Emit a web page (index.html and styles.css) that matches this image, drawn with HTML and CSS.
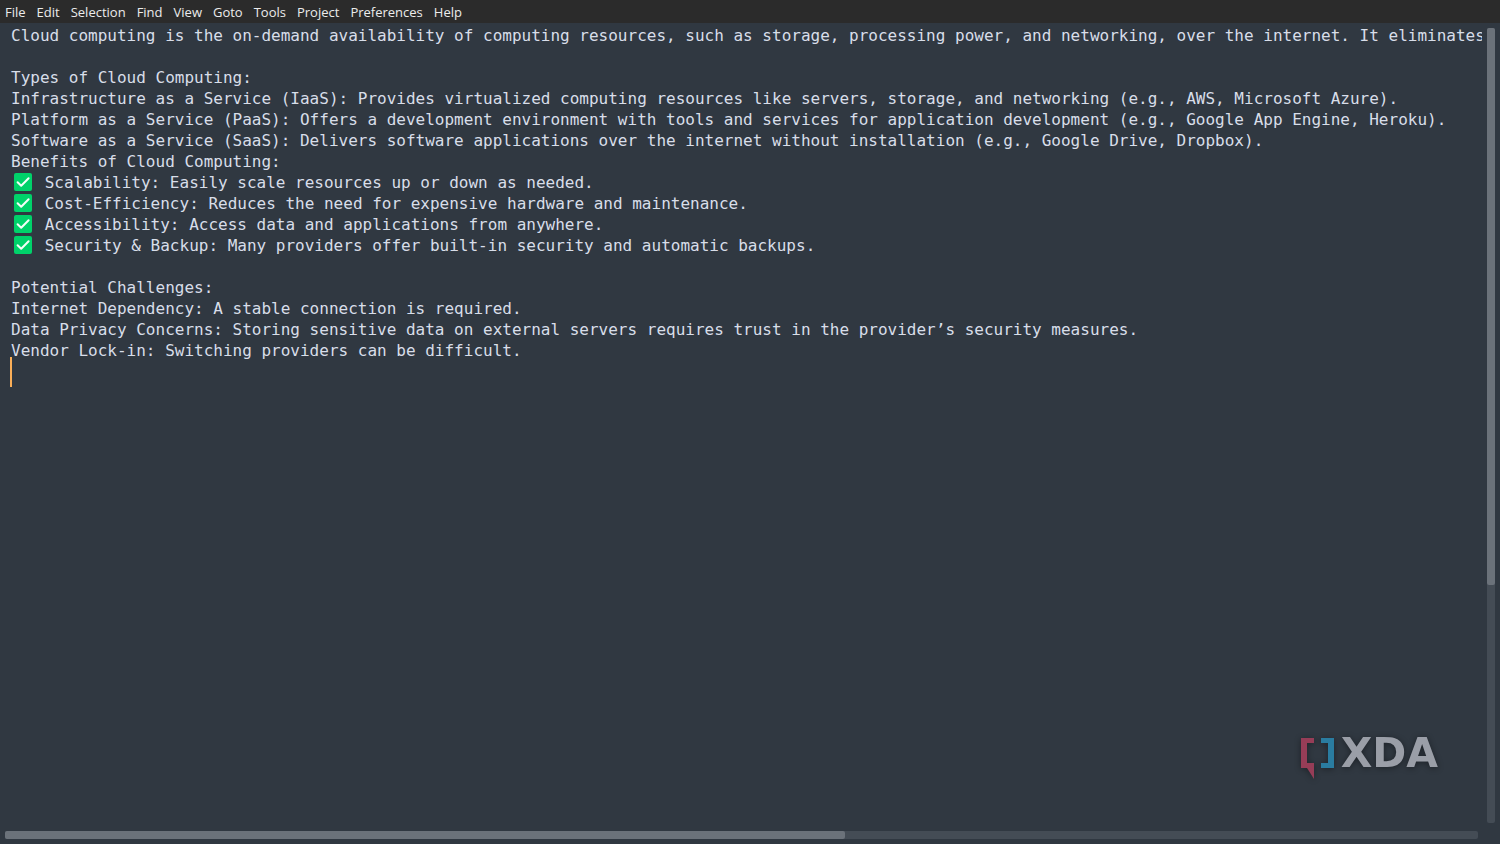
FILE: index.html
```html
<!DOCTYPE html>
<html lang="en">
    <head>
        <meta charset="utf-8">
        <meta name="viewport" content="width=device-width, initial-scale=1.0">
        <title>Cloud computing</title>
        <link rel="stylesheet" href="styles.css">
    </head>
    <body>
        <!-- check mark used in the list lines -->
        <svg class="sprite" aria-hidden="true">
            <symbol id="check" viewBox="0 0 18 18">
                <rect width="18" height="18" rx="2" fill="#00d26a"/>
                <path d="M3.6 9.2 7.2 12.7 14.6 5.3" fill="none" stroke="#f4fff8" stroke-width="2" stroke-linecap="round" stroke-linejoin="round"/>
            </symbol>
        </svg>

        <nav class="menu">
            <button type="button">File</button>
            <button type="button">Edit</button>
            <button type="button">Selection</button>
            <button type="button">Find</button>
            <button type="button">View</button>
            <button type="button">Goto</button>
            <button type="button">Tools</button>
            <button type="button">Project</button>
            <button type="button">Preferences</button>
            <button type="button">Help</button>
        </nav>

        <main class="window">
            <div class="editor" role="textbox" aria-multiline="true" aria-label="Editor" contenteditable="true" spellcheck="false">
                <div class="line">Cloud computing is the on-demand availability of computing resources, such as storage, processing power, and networking, over the internet. It eliminates</div>
                <div class="line"></div>
                <div class="line">Types of Cloud Computing:</div>
                <div class="line">Infrastructure as a Service (IaaS): Provides virtualized computing resources like servers, storage, and networking (e.g., AWS, Microsoft Azure).</div>
                <div class="line">Platform as a Service (PaaS): Offers a development environment with tools and services for application development (e.g., Google App Engine, Heroku).</div>
                <div class="line">Software as a Service (SaaS): Delivers software applications over the internet without installation (e.g., Google Drive, Dropbox).</div>
                <div class="line">Benefits of Cloud Computing:</div>
                <div class="line"><svg class="check"><use href="#check"/></svg> Scalability: Easily scale resources up or down as needed.</div>
                <div class="line"><svg class="check"><use href="#check"/></svg> Cost-Efficiency: Reduces the need for expensive hardware and maintenance.</div>
                <div class="line"><svg class="check"><use href="#check"/></svg> Accessibility: Access data and applications from anywhere.</div>
                <div class="line"><svg class="check"><use href="#check"/></svg> Security &amp; Backup: Many providers offer built-in security and automatic backups.</div>
                <div class="line"></div>
                <div class="line">Potential Challenges:</div>
                <div class="line">Internet Dependency: A stable connection is required.</div>
                <div class="line">Data Privacy Concerns: Storing sensitive data on external servers requires trust in the provider’s security measures.</div>
                <div class="line">Vendor Lock-in: Switching providers can be difficult.</div>
                <div class="line"><span class="caret"></span></div>
            </div>
            <div class="scroll vertical"><div class="thumb"></div></div>
            <div class="scroll horizontal"><div class="thumb"></div></div>
            <div class="logo">
                <svg class="brackets" viewBox="0 0 34 41" aria-hidden="true">
                    <path d="M0 0H13V5H6V25H13V41L6 30H0Z" fill="#963d57"/>
                    <path d="M20 0H33V30H20V25H27V5H20Z" fill="#2a7ca0"/>
                </svg>
                <span class="wordmark">XDA</span>
            </div>
        </main>
    </body>
</html>
```

FILE: styles.css
```css
* {
    box-sizing: border-box;
}

body {
    display: flex;
    flex-direction: column;
    height: 100vh;
    margin: 0;
    background-color: #303841;
    overflow: hidden;
}

.sprite {
    display: none;
}

.menu {
    display: flex;
    gap: 11px;
    height: 23px;
    padding: 0 5px;
    background-color: #2b2b2b;
}

.menu button {
    padding: 0;
    border: 0;
    background: none;
    color: #ececec;
    font-family: "Open Sans", "Noto Sans", sans-serif;
    font-size: 13px;
    line-height: 24px;
}

.window {
    position: relative;
    display: grid;
    grid-template-columns: minmax(0, 1fr) 18px;
    grid-template-rows: minmax(0, 1fr) 18px;
    flex: 1;
    min-height: 0;
}

.editor {
    padding: 2px 0 0 11px;
    color: #d8dee9;
    font-family: "DejaVu Sans Mono", monospace;
    font-size: 16px;
    line-height: 21px;
    white-space: nowrap;
    overflow: hidden;
    outline: none;
}

.line {
    height: 21px;
    white-space: pre;
}

.check {
    width: 18px;
    height: 18px;
    margin: 0 3px;
    vertical-align: -3px;
}

.caret {
    display: block;
    width: 2px;
    height: 30px;
    margin: -4px 0 0 -1px;
    background-color: #f9ae58;
}

.scroll {
    border-radius: 2px;
    background-color: #444c55;
}

.scroll .thumb {
    border-radius: 2px;
    background-color: #6b727a;
}

.vertical {
    margin: 5px 5px 3px;
}

.vertical .thumb {
    height: 70%;
}

.horizontal {
    margin: 5px 4px 5px 5px;
}

.horizontal .thumb {
    width: 57%;
    height: 100%;
}

/* watermark over the editor */
.logo {
    position: absolute;
    right: 62px;
    bottom: 65px;
    display: flex;
    gap: 6px;
    filter: drop-shadow(0 1px 3px rgba(0, 0, 0, .4));
}

.brackets {
    width: 34px;
    height: 41px;
}

.wordmark {
    color: #9a9ea7;
    font-family: "DejaVu Sans", sans-serif;
    font-size: 41px;
    font-weight: bold;
    line-height: 30px;
}
```
